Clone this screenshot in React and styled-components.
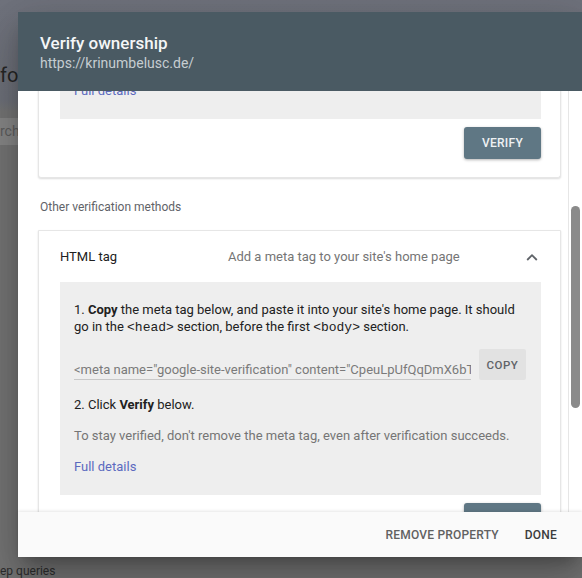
import React from "react";
import styled, { createGlobalStyle } from "styled-components";

const GlobalStyle = createGlobalStyle`
  html, body {
    margin: 0;
    padding: 0;
    overflow: hidden;
  }

  body {
    font-family: Roboto, "Liberation Sans", Arial, sans-serif;
  }
`;

const Page = styled.div`
  position: relative;
  width: 582px;
  height: 578px;
  overflow: hidden;
`;

const BackPage = styled.div`
  display: flex;
  flex-direction: column;
  height: 100%;
  padding-top: 62px;
  box-sizing: border-box;
  background: linear-gradient(#70737d 0, #6e717a 100px, #757575 112px);
  color: #262626;
`;

const BackHeading = styled.div`
  font-size: 20px;
  line-height: 26px;
`;

const BackSearch = styled.div`
  margin-top: 30px;
  width: 60px;
  height: 27px;
  line-height: 27px;
  background: #878787;
  color: #5e5e5e;
  font-size: 14px;
`;

const BackFoot = styled.div`
  margin-top: auto;
  font-size: 12px;
  line-height: 14px;
  color: #2e2e2e;
`;

const Dialog = styled.div`
  position: absolute;
  top: 12px;
  left: 18px;
  width: 564px;
  height: 545px;
  display: flex;
  flex-direction: column;
  background: #fff;
  box-shadow: 0 11px 15px -7px rgba(0, 0, 0, 0.25),
    0 24px 38px 3px rgba(0, 0, 0, 0.16), 0 9px 46px 8px rgba(0, 0, 0, 0.12);
`;

const Header = styled.div`
  flex: none;
  height: 79px;
  box-sizing: border-box;
  padding: 21px 22px 0;
  background: #4a5a63;
`;

const Title = styled.div`
  font-size: 17px;
  line-height: 21px;
  font-weight: 500;
  color: #f4f6f7;
`;

const Subtitle = styled.div`
  font-size: 14px;
  line-height: 18px;
  color: #c6cdd1;
`;

const Body = styled.div`
  flex: 1;
  min-height: 0;
  display: flex;
  overflow: hidden;
`;

const Scroller = styled.div`
  flex: 1;
  min-width: 0;
  padding: 0 7px 0 20px;
`;

const Track = styled.div`
  flex: none;
  width: 13px;
  border-left: 1px solid #e6e6e6;
`;

const Thumb = styled.div`
  width: 9px;
  height: 202px;
  margin: 115px 0 0 2px;
  border-radius: 5px;
  background: #8a8a8a;
`;

const Card = styled.div`
  background: #fff;
  border: 1px solid #e6e6e6;
  border-top: ${(p) => (p.$scrolled ? "none" : "1px solid #e6e6e6")};
  margin-top: ${(p) => (p.$scrolled ? "-24px" : "0")};
  border-radius: 0 0 3px 3px;
  box-shadow: 0 1px 2px rgba(0, 0, 0, 0.14);
  padding: 0 19px 18px 21px;
`;

const InfoBox = styled.div`
  background: #eeeeee;
  padding: ${(p) => (p.$compact ? "14px 14px 18px" : "19px 15px 20px 14px")};
  color: #212121;
  font-size: 13px;
  line-height: 17px;
`;

const Step = styled.p`
  margin: ${(p) => p.$top || 0}px 0 0;
`;

const Note = styled.p`
  margin: 14px 0 0;
  color: #757575;
`;

const Code = styled.code`
  font-family: "Liberation Mono", "DejaVu Sans Mono", monospace;
  font-size: 13px;
`;

const DetailsLink = styled.a`
  display: block;
  margin-top: ${(p) => p.$top || 0}px;
  line-height: ${(p) => (p.$tall ? "20px" : "17px")};
  color: #5b6abf;
  text-decoration: none;
  font-size: 13px;
`;

const CopyRow = styled.div`
  display: flex;
  align-items: flex-end;
  gap: 8px;
  margin-top: 13px;
`;

const TagField = styled.div`
  flex: 1;
  min-width: 0;
  white-space: nowrap;
  overflow: hidden;
  font-size: 13px;
  line-height: 18px;
  color: #7a7a7a;
  border-bottom: 1px solid #c8c8c8;
`;

const CopyButton = styled.button`
  flex: none;
  width: 47px;
  height: 31px;
  padding: 0;
  border: none;
  border-radius: 2px;
  background: #e2e2e2;
  color: #5f6368;
  font-family: inherit;
  font-size: 11.5px;
  font-weight: 500;
  letter-spacing: 0.5px;
`;

const ButtonRow = styled.div`
  display: flex;
  justify-content: flex-end;
  margin-top: 8px;
`;

const VerifyButton = styled.button`
  width: 77px;
  height: 32px;
  padding: 0;
  border: none;
  border-radius: 3px;
  background: #5f7784;
  color: #eef1f3;
  font-family: inherit;
  font-size: 12px;
  font-weight: 500;
  letter-spacing: 0.3px;
  box-shadow: 0 1px 3px rgba(0, 0, 0, 0.3);
`;

const SectionLabel = styled.div`
  margin: 21px 0 15px 2px;
  font-size: 12px;
  line-height: 16px;
  color: #5f6368;
`;

const AccordionHead = styled.div`
  display: flex;
  align-items: center;
  height: 51px;
  font-size: 13px;
`;

const MethodName = styled.span`
  width: 168px;
  color: #212121;
`;

const MethodDesc = styled.span`
  flex: 1;
  color: #757575;
`;

const Chevron = styled.svg`
  margin-right: 3px;
`;

const Footer = styled.div`
  position: relative;
  flex: none;
  height: 45px;
  display: flex;
  align-items: center;
  justify-content: flex-end;
  gap: 10px;
  padding-right: 17px;
  background: #fafafa;
  box-shadow: 0 -1px 3px rgba(0, 0, 0, 0.1);
`;

const TextButton = styled.button`
  padding: 0 8px;
  border: none;
  background: none;
  color: ${(p) => (p.$strong ? "#3c3c3c" : "#616161")};
  font-family: inherit;
  font-size: 12px;
  font-weight: 500;
  letter-spacing: 0.2px;
`;

export default function App() {
  return (
    <Page>
      <GlobalStyle />
      <BackPage>
        <BackHeading>fo</BackHeading>
        <BackSearch>rch</BackSearch>
        <BackFoot>ep queries</BackFoot>
      </BackPage>

      <Dialog>
        <Header>
          <Title>Verify ownership</Title>
          <Subtitle>https://krinumbelusc.de/</Subtitle>
        </Header>

        <Body>
          <Scroller>
            <Card $scrolled>
              <InfoBox $compact>
                <DetailsLink $tall href="#">Full details</DetailsLink>
              </InfoBox>
              <ButtonRow>
                <VerifyButton>VERIFY</VerifyButton>
              </ButtonRow>
            </Card>

            <SectionLabel>Other verification methods</SectionLabel>

            <Card>
              <AccordionHead>
                <MethodName>HTML tag</MethodName>
                <MethodDesc>Add a meta tag to your site's home page</MethodDesc>
                <Chevron width="12" height="8" viewBox="0 0 12 8">
                  <path
                    d="M1.2 7 L6 2.2 L10.8 7"
                    fill="none"
                    stroke="#5f6368"
                    strokeWidth="1.8"
                  />
                </Chevron>
              </AccordionHead>
              <InfoBox>
                <Step>
                  1. <b>Copy</b> the meta tag below, and paste it into your
                  site's home page. It should go in the <Code>&lt;head&gt;</Code>{" "}
                  section, before the first <Code>&lt;body&gt;</Code> section.
                </Step>
                <CopyRow>
                  <TagField>
                    &lt;meta name="google-site-verification"
                    content="CpeuLpUfQqDmX6bT4sVx9kLr2Wq" /&gt;
                  </TagField>
                  <CopyButton>COPY</CopyButton>
                </CopyRow>
                <Step $top={16}>
                  2. Click <b>Verify</b> below.
                </Step>
                <Note>
                  To stay verified, don't remove the meta tag, even after
                  verification succeeds.
                </Note>
                <DetailsLink $top={14} href="#">
                  Full details
                </DetailsLink>
              </InfoBox>
              <ButtonRow>
                <VerifyButton>VERIFY</VerifyButton>
              </ButtonRow>
            </Card>
          </Scroller>
          <Track>
            <Thumb />
          </Track>
        </Body>

        <Footer>
          <TextButton>REMOVE PROPERTY</TextButton>
          <TextButton $strong>DONE</TextButton>
        </Footer>
      </Dialog>
    </Page>
  );
}
